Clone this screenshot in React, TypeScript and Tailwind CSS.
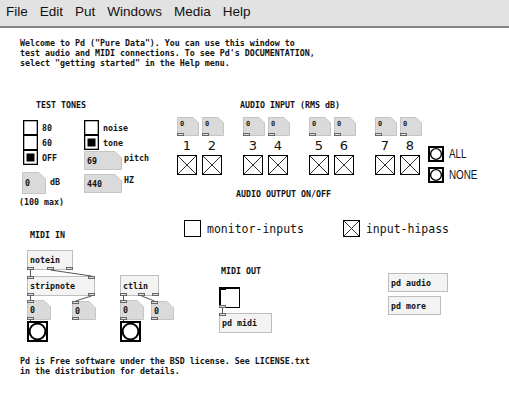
// @ts-nocheck
import * as React from 'react';

const mono = "font-['DejaVu_Sans_Mono',monospace] font-bold";
const small = `text-[8.3px] leading-[10px] text-[#111] ${mono}`;

const menus = ['File', 'Edit', 'Put', 'Windows', 'Media', 'Help'];

// wires between patch objects, canvas coordinates (canvas starts under the menu bar)
const wires = [
  [30, 242, 30, 248],
  [50, 242, 91, 248],
  [30, 268, 30, 272],
  [91, 268, 75, 273],
  [30, 292, 30, 293],
  [123, 268, 123, 272],
  [141, 268, 154, 273],
  [123, 292, 123, 293],
  [222, 280, 222, 285],
];

function Label({ className = '', children }) {
  return <div className={`absolute whitespace-pre ${small} ${className}`}>{children}</div>;
}

function Port({ className = '', dark = false }) {
  return (
    <div
      className={`absolute h-[3px] w-[7px] border ${dark ? 'border-black bg-black' : 'border-[#666] bg-[#dedede]'} ${className}`}
    />
  );
}

function Obj({ className = '', text, ports = [] }) {
  return (
    <div className={`absolute flex items-center border border-[#bdbdbd] bg-[#f3f3f3] pl-[2px] ${small} ${className}`}>
      {text}
      {ports.map((p) => (
        <Port key={p} className={p} />
      ))}
    </div>
  );
}

function NumBox({ w, h, v, cut = 7, tiny = false, inlet = false, outlet = false, className = '' }) {
  return (
    <div className={`relative shrink-0 ${className}`}>
      <svg width={w} height={h} className="block">
        <polygon
          points={`0.5,0.5 ${w - cut},0.5 ${w - 0.5},${cut} ${w - 0.5},${h - 0.5} 0.5,${h - 0.5}`}
          fill="#dadada"
          stroke="#c4c4c4"
        />
      </svg>
      {tiny ? (
        <span className={`absolute left-[3px] top-[2px] text-[7px] leading-[10px] text-[#222] ${mono}`}>{v}</span>
      ) : (
        <span className={`absolute inset-y-0 left-[3px] flex items-center ${small}`}>{v}</span>
      )}
      {inlet && <Port className="left-0 top-0" />}
      {outlet && <Port className="bottom-0 left-0" />}
    </div>
  );
}

function Toggle({ s, on = false }) {
  return (
    <svg width={s} height={s} className="block shrink-0">
      <rect x={0.5} y={0.5} width={s - 1} height={s - 1} fill="white" stroke="#000" />
      {on && <path d={`M1 1L${s - 1} ${s - 1}M${s - 1} 1L1 ${s - 1}`} stroke="#333" strokeWidth={1} />}
    </svg>
  );
}

function Bang({ s, thick = false, className = '' }) {
  return (
    <svg width={s} height={s} className={`block shrink-0 ${className}`}>
      <rect x={1} y={1} width={s - 2} height={s - 2} fill="white" stroke="#000" strokeWidth={2} />
      <circle cx={s / 2} cy={s / 2} r={s / 2 - 2.6} fill="white" stroke="#000" strokeWidth={thick ? 2 : 1.4} />
    </svg>
  );
}

function VRadio({ labels, sel }) {
  const s = 15;
  const n = labels.length;
  return (
    <div className="flex">
      <svg width={s} height={s * n} className="block">
        {labels.map((_, i) => (
          <rect key={i} x={0.5} y={i * s + 0.5} width={s - 1} height={s - 1} fill="white" stroke="#000" />
        ))}
        <rect x={0.5} y={0.5} width={s - 1} height={s * n - 1} fill="none" stroke="#000" strokeWidth={1.6} />
        <rect x={3.5} y={sel * s + 3.5} width={s - 7} height={s - 7} fill="#000" />
      </svg>
      <div className="ml-[4px] flex flex-col">
        {labels.map((l) => (
          <div key={l} className={`flex h-[15px] items-center ${small}`}>
            {l}
          </div>
        ))}
      </div>
    </div>
  );
}

function Channel({ n }) {
  return (
    <div className="flex w-[20px] flex-col">
      <NumBox w={22} h={19} v="0" cut={6} tiny outlet />
      <div className="mt-[3px] text-center font-['DejaVu_Sans',sans-serif] text-[13px] leading-[14px] text-[#111]">{n}</div>
      <div className="mt-[2px]">
        <Toggle s={20} on />
      </div>
    </div>
  );
}

export default function App() {
  return (
    <div className="h-[406px] w-[509px] overflow-hidden bg-white">
      {/* menu bar */}
      <div className="flex h-[28px] items-center border-b-2 border-[#858585] bg-[#e2e2e2] pb-[1px] font-['Liberation_Sans',sans-serif] text-[13.5px] text-[#111]">
        {menus.map((m) => (
          <span key={m} className="px-[6px]">
            {m}
          </span>
        ))}
      </div>

      {/* patch canvas: objects sit at their patch coordinates */}
      <div className="relative h-[378px]">
        <Label className="left-[20px] top-[10px]">
          {'Welcome to Pd ("Pure Data"). You can use this window to\ntest audio and MIDI connections. To see Pd\'s DOCUMENTATION,\nselect "getting started" in the Help menu.'}
        </Label>

        {/* test tones */}
        <Label className="left-[36px] top-[72px]">TEST TONES</Label>
        <div className="absolute left-[23px] top-[92px]">
          <VRadio labels={['80', '60', 'OFF']} sel={2} />
        </div>
        <div className="absolute left-[84px] top-[92px]">
          <VRadio labels={['noise', 'tone']} sel={1} />
        </div>
        <div className="absolute left-[84px] top-[123px] flex flex-col gap-[4px]">
          <div className="flex gap-[2px]">
            <NumBox w={38} h={19} v="69" />
            <span className={`mt-[2px] ${small}`}>pitch</span>
          </div>
          <div className="flex gap-[2px]">
            <NumBox w={38} h={19} v="440" />
            <span className={`mt-[1px] ${small}`}>HZ</span>
          </div>
        </div>
        <div className="absolute left-[22px] top-[144px] flex gap-[4px]">
          <NumBox w={24} h={22} v="0" />
          <span className={`mt-[5px] ${small}`}>dB</span>
        </div>
        <Label className="left-[19px] top-[169px]">(100 max)</Label>

        {/* audio in / out */}
        <Label className="left-[240px] top-[72px]">AUDIO INPUT (RMS dB)</Label>
        <div className="absolute left-[177px] top-[89px] flex gap-[21px]">
          {[
            [1, 2],
            [3, 4],
            [5, 6],
            [7, 8],
          ].map((pair) => (
            <div key={pair[0]} className="flex gap-[5px]">
              {pair.map((n) => (
                <Channel key={n} n={n} />
              ))}
            </div>
          ))}
        </div>
        <div className="absolute left-[428px] top-[118px] flex flex-col gap-[5px] font-['Liberation_Sans',sans-serif] text-[12px] leading-[14px] text-[#111]">
          <div className="flex items-center gap-[5px]">
            <Bang s={16} />
            <span className="origin-left scale-x-[0.82]">ALL</span>
          </div>
          <div className="flex items-center gap-[5px]">
            <Bang s={16} />
            <span className="origin-left scale-x-[0.82]">NONE</span>
          </div>
        </div>
        <Label className="left-[236px] top-[161px]">AUDIO OUTPUT ON/OFF</Label>

        <div className="absolute left-[184px] top-[192px] flex items-center font-['DejaVu_Sans_Mono',monospace] text-[11.5px] leading-[16px] text-[#111]">
          <Toggle s={17} />
          <span className="ml-[6px]">monitor-inputs</span>
          <span className="ml-[39px]">
            <Toggle s={17} on />
          </span>
          <span className="ml-[6px]">input-hipass</span>
        </div>

        {/* MIDI in */}
        <Label className="left-[30px] top-[202px]">MIDI IN</Label>
        <Obj className="left-[27px] top-[222px] h-[20px] w-[46px]" text="notein" ports={['-bottom-px -left-px', '-bottom-px left-[19px]', '-bottom-px left-[38px]']} />
        <Obj className="left-[27px] top-[248px] h-[20px] w-[68px]" text="stripnote" ports={['-top-px -left-px', '-top-px left-[60px]', '-bottom-px -left-px', '-bottom-px left-[60px]']} />
        <div className="absolute left-[27px] top-[272px] flex flex-col gap-[1px]">
          <NumBox w={24} h={20} v="0" inlet outlet />
          <Bang s={21} thick />
        </div>
        <NumBox className="!absolute left-[72px] top-[273px]" w={24} h={19} v="0" inlet outlet />

        <Obj className="left-[120px] top-[247px] h-[21px] w-[39px]" text="ctlin" ports={['-bottom-px -left-px', '-bottom-px left-[17px]', '-bottom-px left-[31px]']} />
        <div className="absolute left-[120px] top-[272px] flex flex-col gap-[1px]">
          <NumBox w={24} h={20} v="0" inlet outlet />
          <Bang s={21} thick />
        </div>
        <NumBox className="!absolute left-[151px] top-[273px]" w={23} h={19} v="0" inlet outlet />

        {/* MIDI out */}
        <Label className="left-[221px] top-[238px]">MIDI OUT</Label>
        <div className="absolute left-[219px] top-[259px] h-[21px] w-[21px] border border-l-2 border-t-2 border-black bg-white">
          <Port className="-left-[2px] -top-[2px]" dark />
          <Port className="-bottom-px -left-[2px]" />
        </div>
        <Obj className="left-[219px] top-[285px] h-[20px] w-[53px]" text="pd midi" ports={['-top-px -left-px']} />

        <Obj className="left-[388px] top-[245px] h-[19px] w-[60px]" text="pd audio" />
        <Obj className="left-[388px] top-[268px] h-[19px] w-[53px]" text="pd more" />

        <svg className="pointer-events-none absolute left-0 top-0" width={509} height={378}>
          {wires.map(([x1, y1, x2, y2], i) => (
            <line key={i} x1={x1 + 0.5} y1={y1} x2={x2 + 0.5} y2={y2} stroke="#555" strokeWidth={1} />
          ))}
        </svg>

        <Label className="left-[20px] top-[328px]">
          {'Pd is Free software under the BSD license. See LICENSE.txt\nin the distribution for details.'}
        </Label>
      </div>
    </div>
  );
}
